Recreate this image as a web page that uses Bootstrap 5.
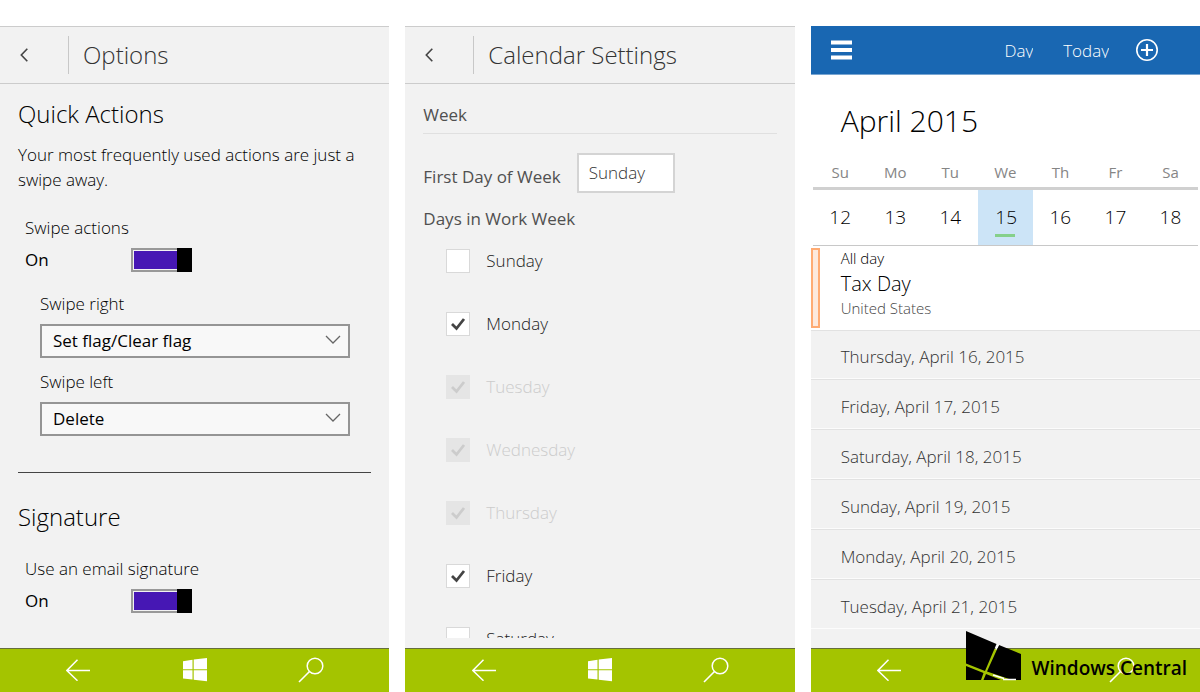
<!DOCTYPE html>
<html lang="en">
<head>
<meta charset="utf-8">
<meta name="viewport" content="width=device-width, initial-scale=1">
<title>Outlook Mail and Calendar settings</title>
<link href="https://cdn.jsdelivr.net/npm/bootstrap@5.3.0/dist/css/bootstrap.min.css" rel="stylesheet">
<style>
  body { font-family: "Open Sans", "Noto Sans", sans-serif; font-size: 17px; line-height: 24px; font-weight: 300; color: #000; background: #fff; }
  .phones { padding-top: 26px; display: grid; grid-template-columns: repeat(3, minmax(0, 1fr)); gap: 16px; }
  .phone { background: #f2f2f2; min-height: 0; }
  .phone-body { min-height: 0; }
  label { display: block; }
  .regular { font-weight: 400; }

  /* title bars */
  .titlebar { height: 58px; flex: none; border-top: 1px solid #ccc; border-bottom: 1px solid #ccc; }
  .titlebar h1 { font-size: 24px; line-height: 32px; font-weight: 300; color: #333; margin: 0; padding-left: 14px; }
  .back-btn { width: 68px; padding: 0 0 0 20px; text-align: left; border: 0; background: none; line-height: 0; }
  .rule-v { width: 1px; height: 38px; background: #c8c8c8; }

  /* bottom navigation */
  .softkeys { height: 44px; flex: none; padding: 0 20px 2px; background: #a4c400; border-top: 1px solid #666f3c; }
  .softkeys button { flex: 1 1 0; border: 0; padding: 0; background: none; line-height: 0; color: #fff; }

  /* mail options */
  .section-title { font-size: 24px; line-height: 32px; font-weight: 300; color: #000; margin: 0; }
  .options { padding: 14px 18px 0; }
  .lead-in { line-height: 25px; padding-top: 12px; }
  .indent-1 { padding-left: 7px; }
  .indent-2 { padding: 20px 21px 0 22px; }
  .state { width: 106px; }
  .options .toggle {
    appearance: none; width: 61px; height: 24px; margin: 0; padding: 1px; border: 2px solid transparent; border-radius: 0;
    background:
      linear-gradient(#000, #000) right / 15px 100% no-repeat border-box,
      linear-gradient(#4617b4, #4617b4) content-box,
      linear-gradient(#f2f2f2, #f2f2f2) padding-box,
      #999 border-box;
  }
  .options .toggle:not(:checked) {
    background:
      linear-gradient(#000, #000) left / 15px 100% no-repeat border-box,
      linear-gradient(#a6a6a6, #a6a6a6) content-box,
      linear-gradient(#f2f2f2, #f2f2f2) padding-box,
      #999 border-box;
  }
  .pick { height: 34px; }
  .pick .form-select { height: 34px; padding: 0 40px 0 11px; border: 2px solid #959595; border-radius: 0; background: #f8f8f8; font-size: 17px; line-height: 24px; font-weight: 400; color: #000; }
  .pick svg { position: absolute; right: 9px; top: 11px; pointer-events: none; }
  .next-pick { padding-top: 12px; }
  .divider { height: 1px; margin: 36px 0 28px; background: #444; border: 0; opacity: 1; }

  /* calendar settings */
  .calset { padding: 19px 18px 0; color: #505050; margin-bottom: 10px; overflow: hidden; }
  .calset h2 { font-size: 17px; line-height: 24px; font-weight: 400; margin: 0; padding-bottom: 6px; border-bottom: 1px solid #e0e0e0; }
  .first-day { padding-top: 19px; }
  .first-day .form-select { width: 98px; height: 40px; padding: 0 10px; border: 2px solid #d4d4d4; border-radius: 0; background: #fff; font-size: 17px; font-weight: 300; color: #333; }
  .first-day label { padding-top: 12px; }
  .days-title { line-height: 20px; }
  .days { padding-left: 23px; }
  .days li { height: 63px; }
  .days .form-check-input { flex: none; width: 24px; height: 24px; margin: 0 16px 0 0; border: 1px solid #d9d9d9; border-radius: 0; background-color: #fff; background-size: 24px 24px; }
  .days .form-check-input:checked { background-color: #fff; background-image: url("data:image/svg+xml,%3csvg xmlns='http://www.w3.org/2000/svg' viewBox='0 0 24 24'%3e%3cpath d='M6 12l4.500 4.500L18 7' fill='none' stroke='%23444' stroke-width='2.800'/%3e%3c/svg%3e"); }
  .days .form-check-input:disabled { opacity: 1; border-color: #e5e5e5; background-color: #e5e5e5; background-image: url("data:image/svg+xml,%3csvg xmlns='http://www.w3.org/2000/svg' viewBox='0 0 24 24'%3e%3cpath d='M6 12l4.500 4.500L18 7' fill='none' stroke='%23ccc' stroke-width='2.800'/%3e%3c/svg%3e"); }
  .days label { font-weight: 300; color: #222; }
  .days .form-check-input:disabled ~ label { opacity: 1; color: #ccc; }

  /* calendar */
  .cal { background: #fff; }
  .appbar { height: 49px; flex: none; background: #1967b2; border-bottom: 1px solid #78a5d1; padding: 0 42px 0 20px; }
  .appbar button { border: 0; padding: 0; background: none; color: #fff; }
  .appbar .cmd { height: 15px; overflow: hidden; font-weight: 300; line-height: 24px; }
  .appbar .cmd span { display: block; margin-top: -4px; }
  .appbar .cmd + .cmd { margin: 0 27px 0 30px; }
  .appbar .icon { line-height: 0; }
  .month { font-size: 30px; line-height: 40px; font-weight: 300; color: #000; margin: 0; padding: 26px 0 19px 30px; }
  .week { margin: 0 2px 2px 2px; }
  .week table { width: 100%; table-layout: fixed; text-align: center; border-bottom: 1px solid #c8c8c8; }
  .week th { font-size: 15px; line-height: 24px; height: 28px; padding: 0 0 1px; font-weight: 400; color: #858585; border-bottom: 3px solid #d0d0d0; vertical-align: top; }
  .week td { font-size: 19px; line-height: 28px; height: 57px; padding: 0; font-weight: 300; color: #000; }
  .week td.today { background: #cce4f7; }
  .today span { display: block; width: 20px; margin: 0 auto; position: relative; }
  .today span::after { content: ""; position: absolute; left: 0; right: 0; bottom: -6px; height: 3px; background: #85d08b; }
  .event-bar { width: 9px; height: 80px; border: 2px solid #ffab73; background: #fde9dd; }
  .event { padding-left: 21px; }
  .event .time { font-size: 15px; line-height: 20px; color: #000; }
  .event .name { font-size: 20px; line-height: 32px; color: #000; }
  .event .place { font-size: 15px; line-height: 16px; color: #444; }
  .agenda { background: #f2f2f2; padding-bottom: 19px; margin-top: 2px; }
  .agenda li { flex: 1 1 0; min-height: 36px; padding: 5px 0 0 30px; border-top: 1px solid #e2e2e2; border-bottom: 1px solid #fcfcfc; color: #333; }

  /* source mark over the last screen */
  .source-mark { position: absolute; right: 13px; bottom: 11px; color: #000; font-size: 19px; font-weight: 600; line-height: 26px; gap: 10px; }
</style>
</head>
<body>
<svg width="0" height="0" class="position-absolute" aria-hidden="true">
  <symbol id="i-chev" viewBox="0 0 8 14"><path d="M7.300 .7 1.300 7l6 6.300" fill="none" stroke="#444" stroke-width="1.600"/></symbol>
  <symbol id="i-down" viewBox="0 0 16 10"><path d="M1 1l7 7 7-7" fill="none" stroke="#666" stroke-width="1.300"/></symbol>
  <symbol id="i-back" viewBox="0 0 24 22"><path d="M24 11.500H1M11.500 .7 .9 11.500l10.600 10.200" fill="none" stroke="#fff" stroke-width="1.500"/></symbol>
  <symbol id="i-win" viewBox="0 0 24 24"><path d="M0 3.200l9.500-1.400v9.400H0zM10.700 1.600 24 0v11.200H10.700zM0 12.300h9.500v9.200L0 20.400zM10.700 12.300H24v11L10.700 21.700z" fill="#fff"/></symbol>
  <symbol id="i-find" viewBox="0 0 26 26"><circle cx="17" cy="9" r="7.800" fill="none" stroke="#fff" stroke-width="1.500"/><path d="M11.500 14.500 1 25" stroke="#fff" stroke-width="1.600"/></symbol>
</svg>

<main class="phones vh-100">
  <section class="phone d-flex flex-column" aria-label="Options">
    <header class="titlebar d-flex align-items-center">
      <button class="back-btn" type="button" aria-label="Back"><svg width="8" height="14"><use href="#i-chev"/></svg></button>
      <span class="rule-v"></span>
      <h1>Options</h1>
    </header>
    <div class="phone-body options flex-grow-1 overflow-hidden">
      <h2 class="section-title">Quick Actions</h2>
      <p class="lead-in mb-0">Your most frequently used actions are just a swipe away.</p>
      <div class="indent-1 pt-4">
        <label for="swipe">Swipe actions</label>
        <div class="d-flex align-items-center pt-2"><span class="state regular">On</span><input id="swipe" class="toggle" type="checkbox" role="switch" checked></div>
      </div>
      <div class="indent-2">
        <label for="sr">Swipe right</label>
        <div class="pick position-relative mt-2"><select id="sr" class="form-select"><option>Set flag/Clear flag</option></select><svg width="16" height="10"><use href="#i-down"/></svg></div>
        <label class="next-pick" for="sl">Swipe left</label>
        <div class="pick position-relative mt-2"><select id="sl" class="form-select"><option>Delete</option></select><svg width="16" height="10"><use href="#i-down"/></svg></div>
      </div>
      <hr class="divider">
      <h2 class="section-title">Signature</h2>
      <div class="indent-1 pt-4">
        <label for="sig">Use an email signature</label>
        <div class="d-flex align-items-center pt-2"><span class="state regular">On</span><input id="sig" class="toggle" type="checkbox" role="switch" checked></div>
      </div>
    </div>
    <nav class="softkeys d-flex align-items-center">
      <button type="button" aria-label="Back"><svg width="24" height="22"><use href="#i-back"/></svg></button>
      <button type="button" aria-label="Start"><svg width="24" height="24"><use href="#i-win"/></svg></button>
      <button type="button" aria-label="Search"><svg width="26" height="26"><use href="#i-find"/></svg></button>
    </nav>
  </section>

  <section class="phone d-flex flex-column" aria-label="Calendar Settings">
    <header class="titlebar d-flex align-items-center">
      <button class="back-btn" type="button" aria-label="Back"><svg width="8" height="14"><use href="#i-chev"/></svg></button>
      <span class="rule-v"></span>
      <h1>Calendar Settings</h1>
    </header>
    <div class="phone-body calset flex-grow-1">
      <h2>Week</h2>
      <div class="first-day d-flex align-items-start gap-3">
        <label class="regular" for="fd">First Day of Week</label>
        <select id="fd" class="form-select"><option>Sunday</option></select>
      </div>
      <div class="days-title regular pt-3">Days in Work Week</div>
      <ul class="days list-unstyled m-0">
        <li class="d-flex align-items-center"><input class="form-check-input" type="checkbox" id="d0"><label for="d0">Sunday</label></li>
        <li class="d-flex align-items-center"><input class="form-check-input" type="checkbox" id="d1" checked><label for="d1">Monday</label></li>
        <li class="d-flex align-items-center"><input class="form-check-input" type="checkbox" id="d2" checked disabled><label for="d2">Tuesday</label></li>
        <li class="d-flex align-items-center"><input class="form-check-input" type="checkbox" id="d3" checked disabled><label for="d3">Wednesday</label></li>
        <li class="d-flex align-items-center"><input class="form-check-input" type="checkbox" id="d4" checked disabled><label for="d4">Thursday</label></li>
        <li class="d-flex align-items-center"><input class="form-check-input" type="checkbox" id="d5" checked><label for="d5">Friday</label></li>
        <li class="d-flex align-items-center"><input class="form-check-input" type="checkbox" id="d6"><label for="d6">Saturday</label></li>
      </ul>
    </div>
    <nav class="softkeys d-flex align-items-center">
      <button type="button" aria-label="Back"><svg width="24" height="22"><use href="#i-back"/></svg></button>
      <button type="button" aria-label="Start"><svg width="24" height="24"><use href="#i-win"/></svg></button>
      <button type="button" aria-label="Search"><svg width="26" height="26"><use href="#i-find"/></svg></button>
    </nav>
  </section>

  <section class="phone cal d-flex flex-column position-relative" aria-label="Calendar">
    <header class="appbar d-flex align-items-center">
      <button class="icon me-auto" type="button" aria-label="Menu"><svg width="21" height="20"><path d="M0 2.500h21M0 10h21M0 17.500h21" stroke="#fff" stroke-width="4"/></svg></button>
      <button class="cmd" type="button"><span>Day</span></button>
      <button class="cmd" type="button"><span>Today</span></button>
      <button class="icon" type="button" aria-label="New event"><svg width="22" height="22" fill="none" stroke="#fff"><circle cx="11" cy="11" r="10.200" stroke-width="1.600"/><path d="M11 5v12M5 11h12" stroke-width="2.200"/></svg></button>
    </header>
    <h1 class="month">April 2015</h1>
    <div class="week">
      <table>
        <thead><tr><th>Su</th><th>Mo</th><th>Tu</th><th>We</th><th>Th</th><th>Fr</th><th>Sa</th></tr></thead>
        <tbody><tr><td>12</td><td>13</td><td>14</td><td class="today"><span>15</span></td><td>16</td><td>17</td><td>18</td></tr></tbody>
      </table>
    </div>
    <article class="d-flex">
      <div class="event-bar"></div>
      <div class="event">
        <div class="time">All day</div>
        <div class="name">Tax Day</div>
        <div class="place">United States</div>
      </div>
    </article>
    <ul class="agenda list-unstyled mb-0 flex-grow-1 d-flex flex-column">
      <li class="d-flex align-items-center">Thursday, April 16, 2015</li>
      <li class="d-flex align-items-center">Friday, April 17, 2015</li>
      <li class="d-flex align-items-center">Saturday, April 18, 2015</li>
      <li class="d-flex align-items-center">Sunday, April 19, 2015</li>
      <li class="d-flex align-items-center">Monday, April 20, 2015</li>
      <li class="d-flex align-items-center">Tuesday, April 21, 2015</li>
    </ul>
    <nav class="softkeys d-flex align-items-center">
      <button type="button" aria-label="Back"><svg width="24" height="22"><use href="#i-back"/></svg></button>
      <button type="button" aria-label="Start" class="invisible"><svg width="24" height="24"><use href="#i-win"/></svg></button>
      <button type="button" aria-label="Search"><svg width="26" height="26"><use href="#i-find"/></svg></button>
    </nav>
    <div class="source-mark d-flex align-items-end">
      <svg width="55" height="50"><path d="M0 0 30.500 13 19 40 0 32.500zM33 14 55 23v26H46L21 40.500zM0 35 17.500 42 15 49H0zM20 43l15 6H17.500z"/><path d="M27 44l11 3.500M37 48.500h13M32.300 13.500l-2.500 5" fill="none" stroke="#fff" stroke-width="1.600"/></svg>
      <span>Windows Central</span>
    </div>
  </section>
</main>
<script src="https://cdn.jsdelivr.net/npm/bootstrap@5.3.0/dist/js/bootstrap.bundle.min.js"></script>
</body>
</html>
